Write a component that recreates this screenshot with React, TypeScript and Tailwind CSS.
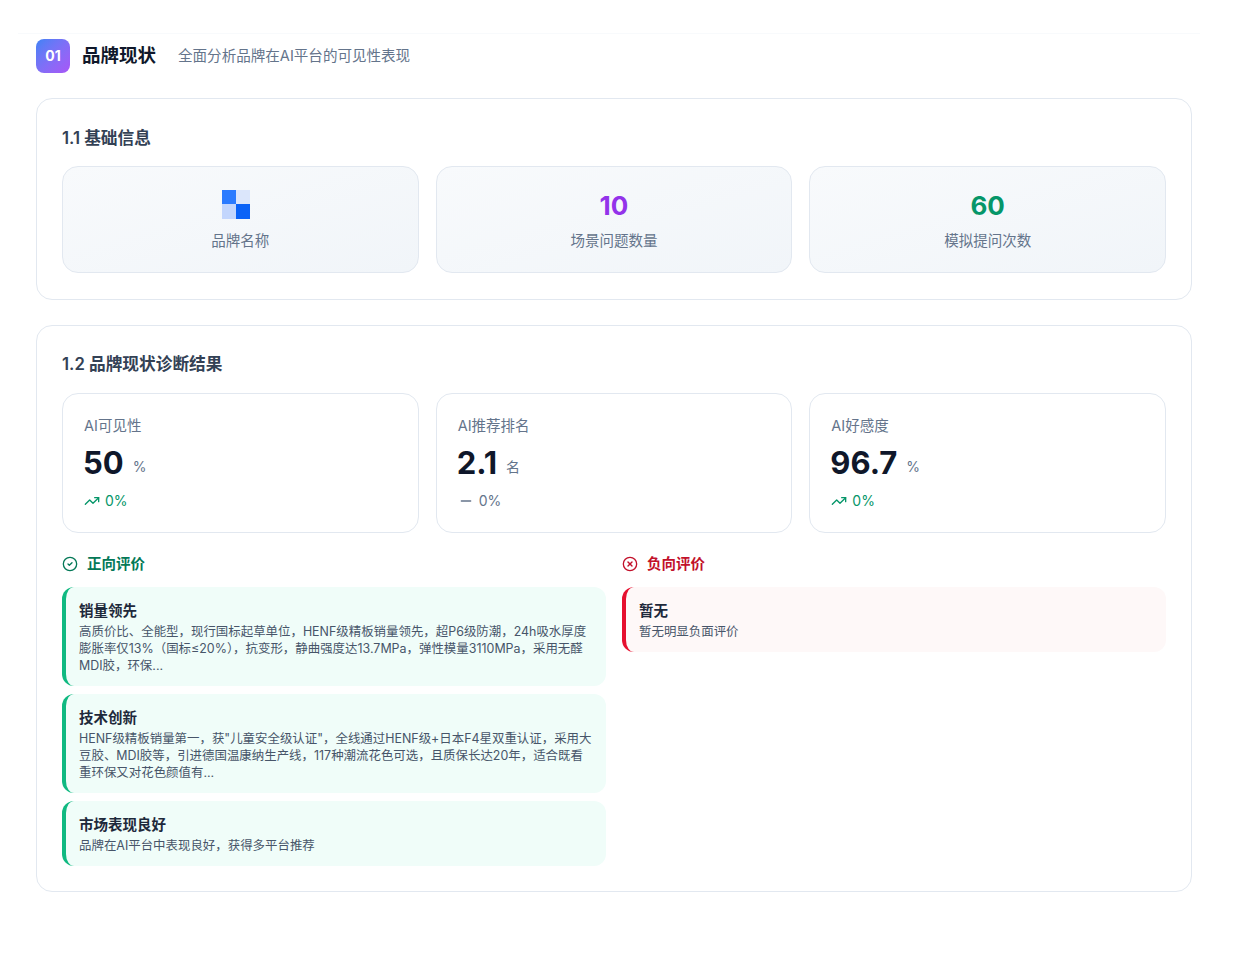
import React from 'react';
import { TrendingUp, Minus, CircleCheck, CircleX } from 'lucide-react';

const fontStack = "font-['Inter','Noto_Sans_CJK_SC',sans-serif]";

const BrandMark = () => (
  <svg width="28" height="29" viewBox="0 0 28 29" className="mr-2 block -mt-[3px]">
    <rect x="0" y="0" width="14" height="14" fill="#2b7bff" />
    <rect x="14" y="0" width="14" height="14" fill="#dbe6fb" />
    <rect x="0" y="14" width="14" height="15" fill="#c3d6fd" />
    <rect x="14" y="14" width="14" height="15" fill="#0a62f7" />
  </svg>
);

const metrics = [
  { label: 'AI可见性', value: '50', unit: '%', change: '0%', up: true },
  { label: 'AI推荐排名', value: '2.1', unit: '名', change: '0%', up: false },
  { label: 'AI好感度', value: '96.7', unit: '%', change: '0%', up: true },
];

const positives = [
  {
    title: '销量领先',
    lines: [
      '高质价比、全能型，现行国标起草单位，HENF级精板销量领先，超P6级防潮，24h吸水厚度',
      '膨胀率仅13%（国标≤20%），抗变形，静曲强度达13.7MPa，弹性模量3110MPa，采用无醛',
      'MDI胶，环保...',
    ],
  },
  {
    title: '技术创新',
    lines: [
      'HENF级精板销量第一，获"儿童安全级认证"，全线通过HENF级+日本F4星双重认证，采用大',
      '豆胶、MDI胶等，引进德国温康纳生产线，117种潮流花色可选，且质保长达20年，适合既看',
      '重环保又对花色颜值有...',
    ],
  },
  {
    title: '市场表现良好',
    lines: ['品牌在AI平台中表现良好，获得多平台推荐'],
  },
];

const InfoCard = ({ children, label }: { children: React.ReactNode; label: string }) => (
  <div className="flex h-[107px] flex-col items-center rounded-2xl border border-[#e2e8f0] bg-gradient-to-br from-[#f8fafc] to-[#f1f5f9] pt-[22px]">
    <div className="flex h-[33px] items-center justify-center">{children}</div>
    <div className="mt-[9px] text-[14.5px] leading-5 text-[#64748b]">{label}</div>
  </div>
);

const ReviewCard = ({ title, lines, negative }: { title: string; lines: string[]; negative?: boolean }) => (
  <div
    className={`rounded-xl border-l-4 pb-3 pl-[13px] pr-2 pt-[15px] ${
      negative ? 'border-[#e6102f] bg-[#fef8f8]' : 'border-[#10b981] bg-[#f0fdf9]'
    }`}
  >
    <div className="text-[14.5px] font-semibold leading-[18px] text-[#1e293b]">{title}</div>
    <div className="mt-[3px] text-[12.45px] leading-[17px] text-[#475569]">
      {lines.map((line) => (
        <div key={line} className="whitespace-nowrap">
          {line}
        </div>
      ))}
    </div>
  </div>
);

export default function App() {
  return (
    <div className={`${fontStack} min-h-[963px] bg-white`}>
      <div className="mx-[18px] mt-[33px] w-[1182px] border-t border-[#f8fafc] px-[18px] pt-[5px]">
        <div className="flex h-[34px] items-center">
          <div className="flex h-[34px] w-[34px] items-center justify-center rounded-lg bg-gradient-to-br from-[#3b82f6] to-[#a855f7] text-sm font-bold text-white">
            01
          </div>
          <h2 className="ml-3 text-[18.5px] font-bold text-[#0f172a]">品牌现状</h2>
          <p className="ml-[22px] mt-[2px] text-[14.55px] text-[#64748b]">全面分析品牌在AI平台的可见性表现</p>
        </div>

        <section className="mt-[25px] w-[1156px] rounded-2xl border border-[#e2e8f0] px-[25px] pb-[26px] pt-[28px]">
          <h3 className="text-[16.7px] font-semibold leading-[22px] text-[#334155]">1.1 基础信息</h3>
          <div className="mt-[17px] grid grid-cols-3 gap-[17px]">
            <InfoCard label="品牌名称">
              <BrandMark />
            </InfoCard>
            <InfoCard label="场景问题数量">
              <span className="text-[26px] font-bold text-[#9333ea]">10</span>
            </InfoCard>
            <InfoCard label="模拟提问次数">
              <span className="text-[26px] font-bold text-[#059669]">60</span>
            </InfoCard>
          </div>
        </section>

        <section className="mt-[25px] w-[1156px] rounded-2xl border border-[#e2e8f0] px-[25px] pb-[25px] pt-[27px]">
          <h3 className="text-[16.7px] font-semibold leading-[22px] text-[#334155]">1.2 品牌现状诊断结果</h3>
          <div className="mt-[18px] grid grid-cols-3 gap-[17px]">
            {metrics.map((m) => (
              <div key={m.label} className="h-[140px] rounded-2xl border border-[#e2e8f0] bg-white px-[21px] pt-[22px]">
                <div className="text-[14.5px] leading-5 text-[#64748b]">{m.label}</div>
                <div className="mt-[9px] flex h-[36px] items-center">
                  <span className="-ml-px text-[31px] font-bold text-[#0f172a]">{m.value}</span>
                  <span className="ml-[9px] mt-[7px] text-sm text-[#64748b]">{m.unit}</span>
                </div>
                <div className={`mt-[10px] flex items-center gap-[5px] text-sm ${m.up ? 'text-[#059669]' : 'text-[#64748b]'}`}>
                  {m.up ? <TrendingUp size={16} /> : <Minus size={16} />}
                  <span>{m.change}</span>
                </div>
              </div>
            ))}
          </div>

          <div className="mt-[20px] grid grid-cols-2 gap-4">
            <div>
              <div className="flex h-[22px] items-center gap-[9px] text-[14.5px] font-semibold text-[#047857]">
                <CircleCheck size={16} />
                <span>正向评价</span>
              </div>
              <div className="mt-3 flex flex-col gap-2">
                {positives.map((p) => (
                  <ReviewCard key={p.title} title={p.title} lines={p.lines} />
                ))}
              </div>
            </div>
            <div>
              <div className="flex h-[22px] items-center gap-[9px] text-[14.5px] font-semibold text-[#c2102a]">
                <CircleX size={16} />
                <span>负向评价</span>
              </div>
              <div className="mt-3">
                <ReviewCard negative title="暂无" lines={['暂无明显负面评价']} />
              </div>
            </div>
          </div>
        </section>
      </div>
    </div>
  );
}
